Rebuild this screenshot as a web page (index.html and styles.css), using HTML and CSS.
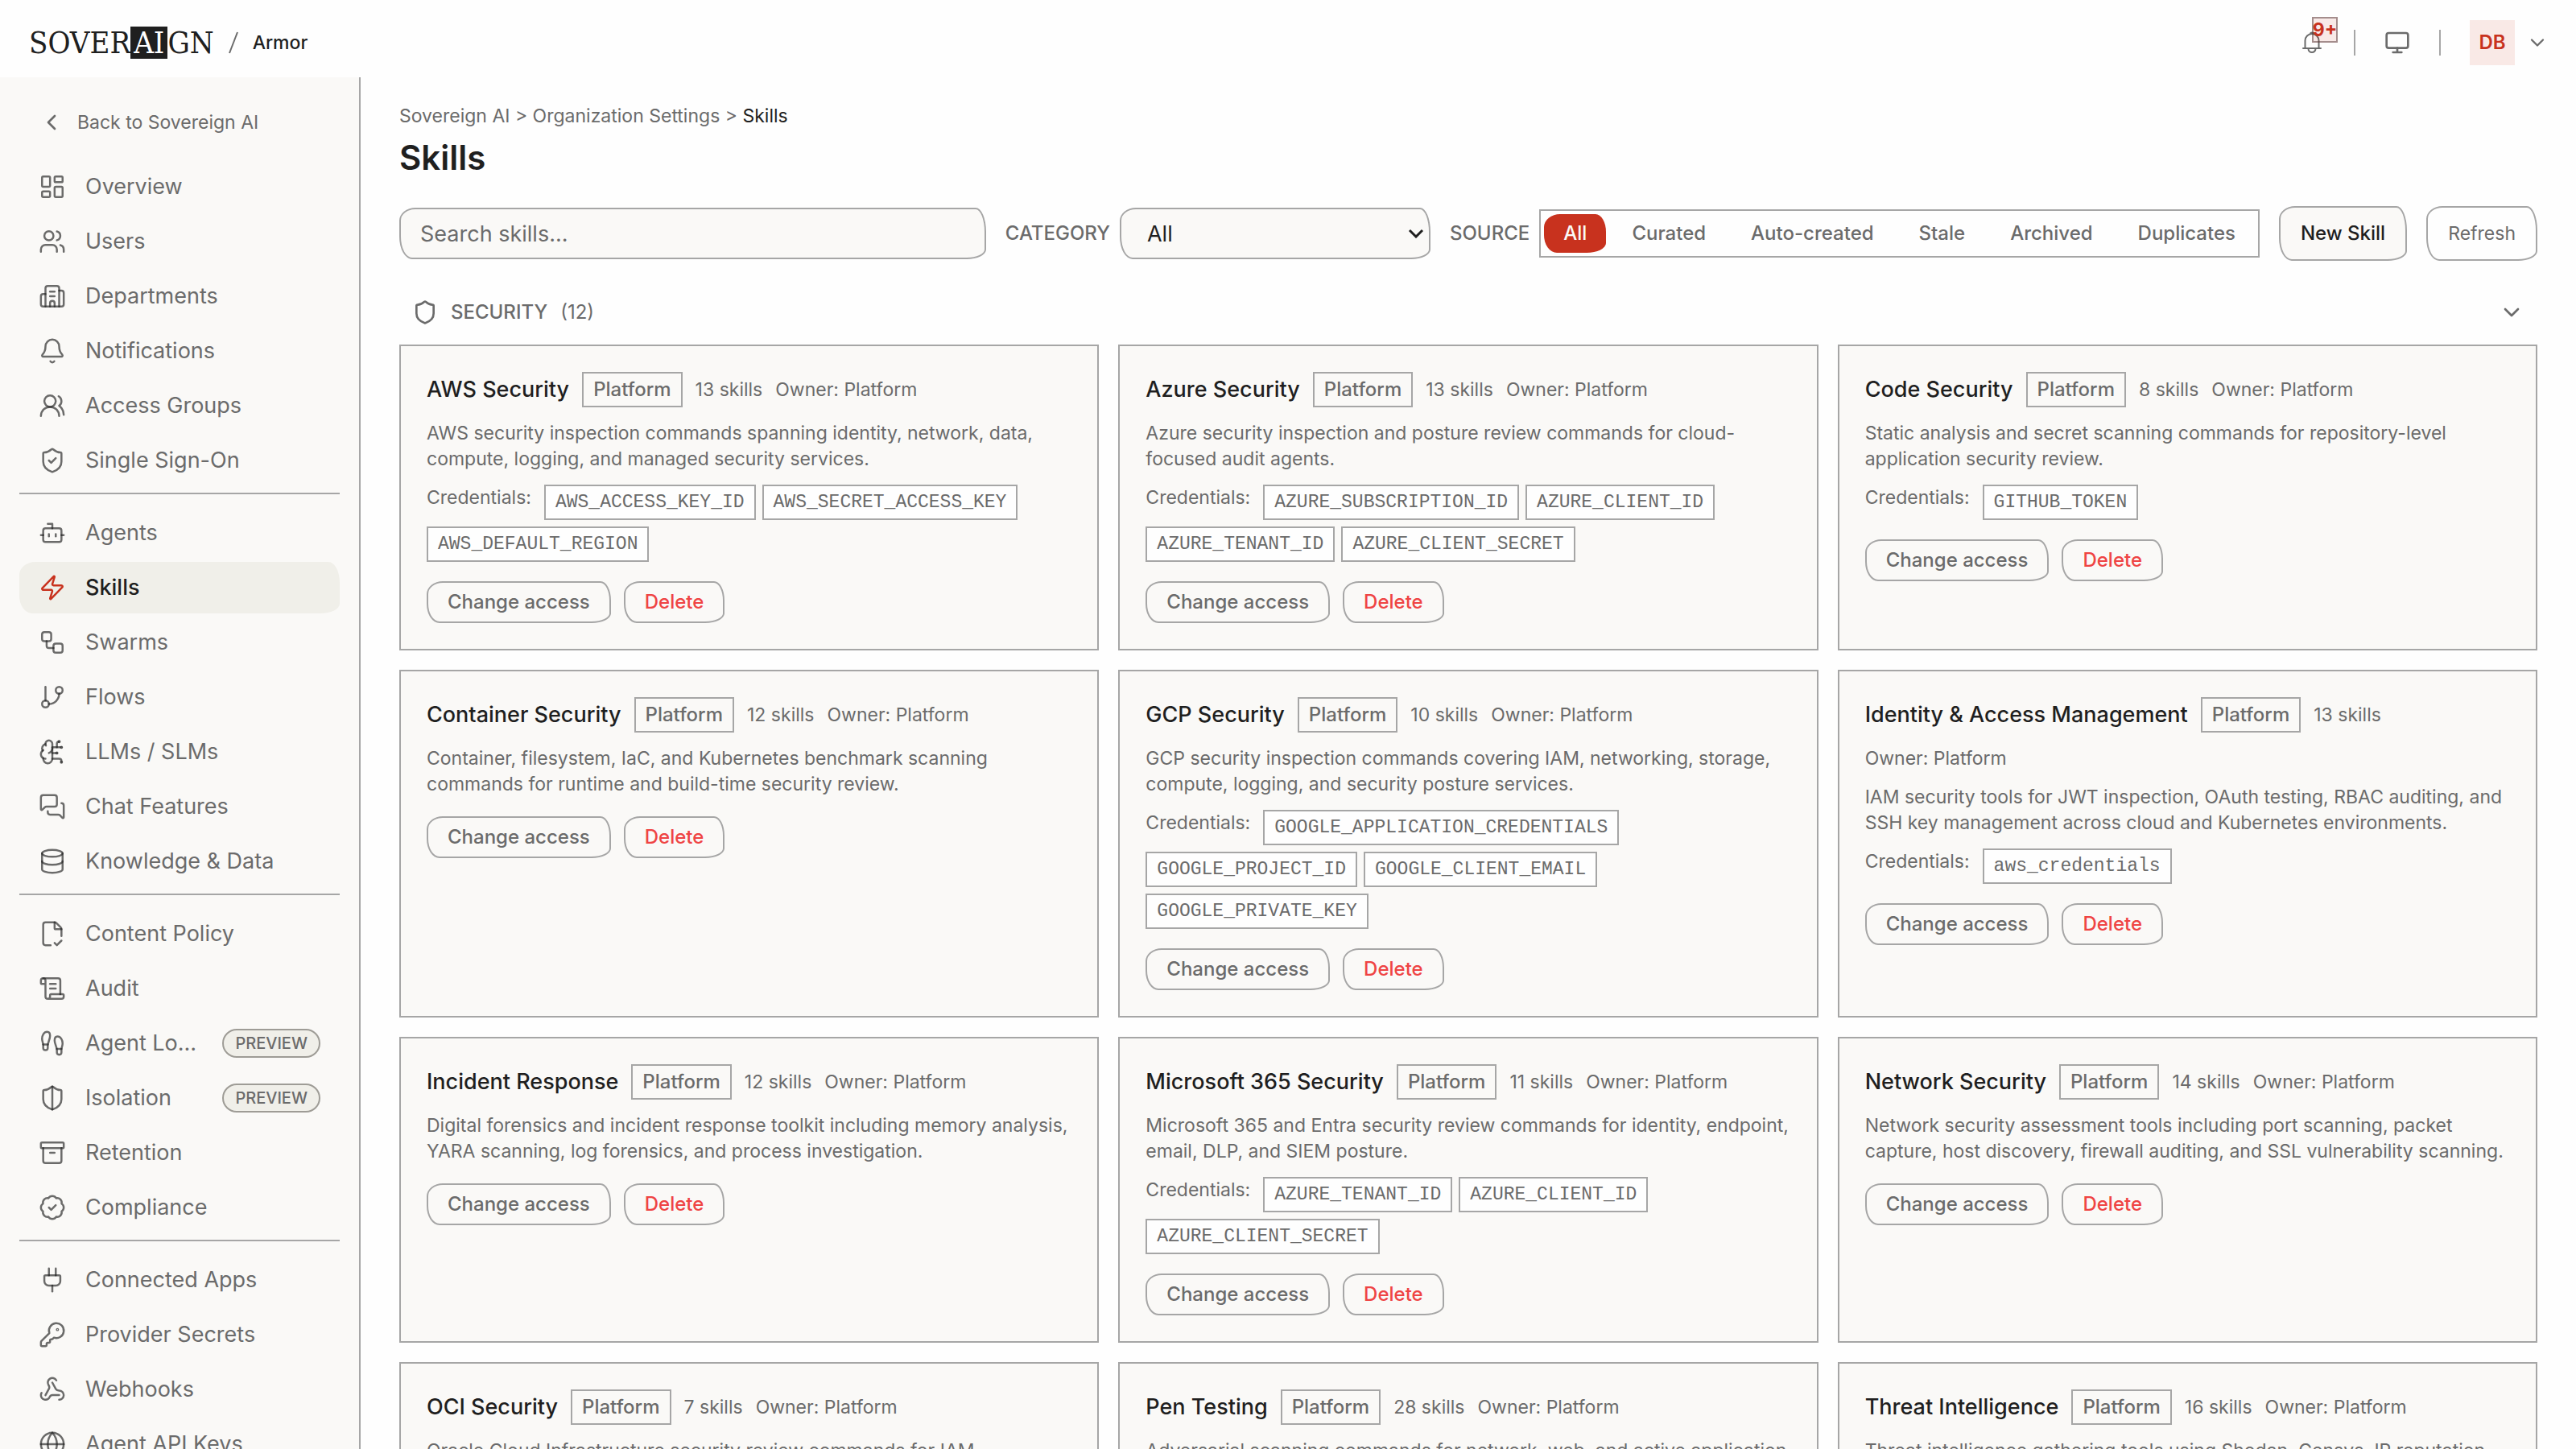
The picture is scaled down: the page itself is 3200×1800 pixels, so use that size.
FILE: index.html
```html
<!DOCTYPE html>
<html lang="en">
  <head>
    <meta charset="UTF-8" />
    <meta name="viewport" content="width=device-width, initial-scale=1.0" />
    <title>Skills - Armor</title>
    <link rel="stylesheet" href="styles.css" />
  </head>
  <body>
    <header class="topbar">
      <a class="logo" href="#">SOVER<span class="logo-mark">AI</span>GN</a>
      <svg class="slash" viewBox="0 0 12 28"><path d="M11 1 1 27" /></svg>
      <a class="org" href="#">Armor</a>
      <div class="topbar-right">
        <button class="icon-button" aria-label="Notifications">
          <svg class="icon" viewBox="0 0 32 32">
            <path d="M5 23h22M7.500 23V13.500a8.500 8.500 0 0 1 17 0V23M14 5.500a2 2 0 0 1 4 0M11.500 23.500a4.500 4.500 0 0 0 9 0" />
          </svg>
          <span class="bell-count">9+</span>
        </button>
        <span class="divider"></span>
        <button class="icon-button" aria-label="Theme">
          <svg class="icon" viewBox="0 0 24 24">
            <rect width="20" height="14" x="2" y="3" rx="2" />
            <path d="M8 21h8M12 17v4" />
          </svg>
        </button>
        <span class="divider"></span>
        <button class="account">
          <span class="avatar">DB</span>
          <svg class="icon icon-small" viewBox="0 0 24 24"><path d="m6 9 6 6 6-6" /></svg>
        </button>
      </div>
    </header>

    <div class="layout">
      <nav class="sidebar">
        <a class="back" href="#">
          <svg class="icon" viewBox="0 0 24 24"><path d="m15 18-6-6 6-6" /></svg>
          Back to Sovereign AI
        </a>
        <div class="nav-group">
          <a class="nav-item" href="#">
            <svg class="icon" viewBox="0 0 24 24"><rect width="7" height="9" x="3" y="3" rx="1" /><rect width="7" height="5" x="14" y="3" rx="1" /><rect width="7" height="9" x="14" y="12" rx="1" /><rect width="7" height="5" x="3" y="16" rx="1" /></svg>
            <span>Overview</span>
          </a>
          <a class="nav-item" href="#">
            <svg class="icon" viewBox="0 0 24 24"><path d="M16 21v-2a4 4 0 0 0-4-4H6a4 4 0 0 0-4 4v2" /><circle cx="9" cy="7" r="4" /><path d="M22 21v-2a4 4 0 0 0-3-3.870" /><path d="M16 3.130a4 4 0 0 1 0 7.750" /></svg>
            <span>Users</span>
          </a>
          <a class="nav-item" href="#">
            <svg class="icon" viewBox="0 0 24 24"><path d="M10 12h4" /><path d="M10 8h4" /><path d="M14 21v-3a2 2 0 0 0-4 0v3" /><path d="M6 10H4a2 2 0 0 0-2 2v7a2 2 0 0 0 2 2h16a2 2 0 0 0 2-2V9a2 2 0 0 0-2-2h-2" /><path d="M6 21V5a2 2 0 0 1 2-2h8a2 2 0 0 1 2 2v16" /></svg>
            <span>Departments</span>
          </a>
          <a class="nav-item" href="#">
            <svg class="icon" viewBox="0 0 24 24"><path d="M10.268 21a2 2 0 0 0 3.464 0" /><path d="M3.262 15.326A1 1 0 0 0 4 17h16a1 1 0 0 0 .74-1.673C19.410 13.956 18 12.499 18 8A6 6 0 0 0 6 8c0 4.499-1.411 5.956-2.738 7.326" /></svg>
            <span>Notifications</span>
          </a>
          <a class="nav-item" href="#">
            <svg class="icon" viewBox="0 0 24 24"><path d="M18 21a8 8 0 0 0-16 0" /><circle cx="10" cy="8" r="5" /><path d="M22 20c0-3.370-2-6.500-4-8a5 5 0 0 0-.45-8.300" /></svg>
            <span>Access Groups</span>
          </a>
          <a class="nav-item" href="#">
            <svg class="icon" viewBox="0 0 24 24"><path d="M20 13c0 5-3.500 7.500-7.660 8.950a1 1 0 0 1-.67-.01C7.500 20.500 4 18 4 13V6a1 1 0 0 1 1-1c2 0 4.500-1.200 6.240-2.720a1.170 1.170 0 0 1 1.520 0C14.510 3.810 17 5 19 5a1 1 0 0 1 1 1z" /><path d="m9 12 2 2 4-4" /></svg>
            <span>Single Sign-On</span>
          </a>
        </div>
        <div class="nav-group">
          <a class="nav-item" href="#">
            <svg class="icon" viewBox="0 0 24 24"><path d="M12 8V4H8" /><rect width="16" height="12" x="4" y="8" rx="2" /><path d="M2 14h2" /><path d="M20 14h2" /><path d="M15 13v2" /><path d="M9 13v2" /></svg>
            <span>Agents</span>
          </a>
          <a class="nav-item active" href="#" aria-current="page">
            <svg class="icon" viewBox="0 0 24 24"><path d="M4 14a1 1 0 0 1-.78-1.630l9.900-10.200a.5.5 0 0 1 .86.460l-1.920 6.020A1 1 0 0 0 13 10h7a1 1 0 0 1 .78 1.630l-9.900 10.200a.5.5 0 0 1-.86-.46l1.920-6.020A1 1 0 0 0 11 14z" /></svg>
            <span>Skills</span>
          </a>
          <a class="nav-item" href="#">
            <svg class="icon" viewBox="0 0 24 24"><rect width="8" height="8" x="3" y="3" rx="2" /><path d="M7 11v4a2 2 0 0 0 2 2h4" /><rect width="8" height="8" x="13" y="13" rx="2" /></svg>
            <span>Swarms</span>
          </a>
          <a class="nav-item" href="#">
            <svg class="icon" viewBox="0 0 24 24"><path d="M6 3v12" /><circle cx="18" cy="6" r="3" /><circle cx="6" cy="18" r="3" /><path d="M18 9a9 9 0 0 1-9 9" /></svg>
            <span>Flows</span>
          </a>
          <a class="nav-item" href="#">
            <svg class="icon" viewBox="0 0 24 24"><path d="M12 5a3 3 0 1 0-5.997.125 4 4 0 0 0-2.526 5.770 4 4 0 0 0 .556 6.588A4 4 0 1 0 12 18Z" /><path d="M9 13a4.500 4.500 0 0 0 3-4" /><path d="M6.003 5.125A3 3 0 0 0 6.401 6.500" /><path d="M3.477 10.896a4 4 0 0 1 .585-.396" /><path d="M6 18a4 4 0 0 1-1.967-.516" /><path d="M12 13h4" /><path d="M12 18h6a2 2 0 0 1 2 2v1" /><path d="M12 8h8" /><path d="M16 8V5a2 2 0 0 1 2-2" /><circle cx="16" cy="13" r=".5" /><circle cx="18" cy="3" r=".5" /><circle cx="20" cy="21" r=".5" /><circle cx="20" cy="8" r=".5" /></svg>
            <span>LLMs / SLMs</span>
          </a>
          <a class="nav-item" href="#">
            <svg class="icon" viewBox="0 0 24 24"><path d="M16 10a2 2 0 0 1-2 2H6.828a2 2 0 0 0-1.414.586l-2.202 2.202A.71.71 0 0 1 2 14.286V4a2 2 0 0 1 2-2h10a2 2 0 0 1 2 2z" /><path d="M20 9a2 2 0 0 1 2 2v10.286a.71.71 0 0 1-1.212.502l-2.202-2.202A2 2 0 0 0 17.172 19H10a2 2 0 0 1-2-2v-1" /></svg>
            <span>Chat Features</span>
          </a>
          <a class="nav-item" href="#">
            <svg class="icon" viewBox="0 0 24 24"><ellipse cx="12" cy="5" rx="9" ry="3" /><path d="M3 5v14a9 3 0 0 0 18 0V5" /><path d="M3 12a9 3 0 0 0 18 0" /></svg>
            <span>Knowledge &amp; Data</span>
          </a>
        </div>
        <div class="nav-group">
          <a class="nav-item" href="#">
            <svg class="icon" viewBox="0 0 24 24"><path d="M10.500 22H6a2 2 0 0 1-2-2V4a2 2 0 0 1 2-2h8a2.400 2.400 0 0 1 1.706.706l3.588 3.588A2.400 2.400 0 0 1 20 8v6" /><path d="M14 2v5a1 1 0 0 0 1 1h5" /><path d="m14 20 2 2 4-4" /></svg>
            <span>Content Policy</span>
          </a>
          <a class="nav-item" href="#">
            <svg class="icon" viewBox="0 0 24 24"><path d="M15 12h-5" /><path d="M15 8h-5" /><path d="M19 17V5a2 2 0 0 0-2-2H4" /><path d="M8 21h12a2 2 0 0 0 2-2v-1a1 1 0 0 0-1-1H11a1 1 0 0 0-1 1v1a2 2 0 1 1-4 0V5a2 2 0 1 0-4 0v2a1 1 0 0 0 1 1h3" /></svg>
            <span>Audit</span>
          </a>
          <a class="nav-item" href="#">
            <svg class="icon" viewBox="0 0 24 24"><path d="M4 16v-2.380C4 11.500 2.970 10.500 3 8c.03-2.720 1.490-6 4.500-6C9.370 2 10 3.800 10 5.500c0 3.110-2 5.660-2 8.680V16a2 2 0 1 1-4 0Z" /><path d="M20 20v-2.380c0-2.120 1.030-3.120 1-5.620-.03-2.720-1.490-6-4.500-6C14.630 6 14 7.800 14 9.500c0 3.110 2 5.660 2 8.680V20a2 2 0 1 0 4 0Z" /><path d="M16 17h4" /><path d="M4 13h4" /></svg>
            <span>Agent Lo…</span>
            <small class="pill">PREVIEW</small>
          </a>
          <a class="nav-item" href="#">
            <svg class="icon" viewBox="0 0 24 24"><path d="M20 13c0 5-3.500 7.500-7.660 8.950a1 1 0 0 1-.67-.01C7.500 20.500 4 18 4 13V6a1 1 0 0 1 1-1c2 0 4.500-1.200 6.240-2.720a1.170 1.170 0 0 1 1.520 0C14.510 3.810 17 5 19 5a1 1 0 0 1 1 1z" /><path d="M12 22V2" /></svg>
            <span>Isolation</span>
            <small class="pill">PREVIEW</small>
          </a>
          <a class="nav-item" href="#">
            <svg class="icon" viewBox="0 0 24 24"><rect width="20" height="5" x="2" y="3" rx="1" /><path d="M4 8v11a2 2 0 0 0 2 2h12a2 2 0 0 0 2-2V8" /><path d="M10 12h4" /></svg>
            <span>Retention</span>
          </a>
          <a class="nav-item" href="#">
            <svg class="icon" viewBox="0 0 24 24"><path d="M3.850 8.620a4 4 0 0 1 4.780-4.770 4 4 0 0 1 6.740 0 4 4 0 0 1 4.780 4.780 4 4 0 0 1 0 6.740 4 4 0 0 1-4.770 4.780 4 4 0 0 1-6.750 0 4 4 0 0 1-4.780-4.770 4 4 0 0 1 0-6.760Z" /><path d="m9 12 2 2 4-4" /></svg>
            <span>Compliance</span>
          </a>
        </div>
        <div class="nav-group">
          <a class="nav-item" href="#">
            <svg class="icon" viewBox="0 0 24 24"><path d="M12 22v-5" /><path d="M9 8V2" /><path d="M15 8V2" /><path d="M18 8a1 1 0 0 1 1 1v4a4 4 0 0 1-4 4H9a4 4 0 0 1-4-4V9a1 1 0 0 1 1-1z" /></svg>
            <span>Connected Apps</span>
          </a>
          <a class="nav-item" href="#">
            <svg class="icon" viewBox="0 0 24 24"><path d="M2.586 17.414A2 2 0 0 0 2 18.828V21a1 1 0 0 0 1 1h3a1 1 0 0 0 1-1v-1a1 1 0 0 1 1-1h1a1 1 0 0 0 1-1v-1a1 1 0 0 1 1-1h.172a2 2 0 0 0 1.414-.586l.814-.814a6.500 6.500 0 1 0-4-4z" /><circle cx="16.500" cy="7.500" r=".5" /></svg>
            <span>Provider Secrets</span>
          </a>
          <a class="nav-item" href="#">
            <svg class="icon" viewBox="0 0 24 24"><path d="M18 16.980h-5.990c-1.100 0-1.950.94-2.480 1.900A4 4 0 0 1 2 17c.01-.7.200-1.400.57-2" /><path d="m6 17 3.130-5.780c.53-.97.100-2.180-.5-3.100a4 4 0 1 1 6.890-4.060" /><path d="m12 6 3.130 5.730C15.660 12.700 16.900 13 18 13a4 4 0 0 1 0 8" /></svg>
            <span>Webhooks</span>
          </a>
          <a class="nav-item" href="#">
            <svg class="icon" viewBox="0 0 24 24"><circle cx="12" cy="12" r="10" /><path d="M12 2a14.500 14.500 0 0 0 0 20 14.500 14.500 0 0 0 0-20" /><path d="M2 12h20" /></svg>
            <span>Agent API Keys</span>
          </a>
        </div>
      </nav>

      <main class="content">
        <div class="breadcrumb">
          <a href="#">Sovereign AI</a> &gt; <a href="#">Organization Settings</a> &gt; <strong>Skills</strong>
        </div>
        <h1>Skills</h1>

        <div class="toolbar">
          <input class="search" type="text" placeholder="Search skills..." aria-label="Search skills" />
          <div class="field">
            <label for="category">CATEGORY</label>
            <select id="category">
              <option>All</option>
            </select>
          </div>
          <div class="field">
            <span class="label">SOURCE</span>
            <div class="segmented">
              <button class="selected">All</button>
              <button>Curated</button>
              <button>Auto-created</button>
              <button>Stale</button>
              <button>Archived</button>
              <button>Duplicates</button>
            </div>
          </div>
          <button class="btn btn-new">New Skill</button>
          <button class="btn">Refresh</button>
        </div>

        <button class="section-head">
          <svg class="icon" viewBox="0 0 24 24"><path d="M20 13c0 5-3.500 7.500-7.660 8.950a1 1 0 0 1-.67-.01C7.500 20.500 4 18 4 13V6a1 1 0 0 1 1-1c2 0 4.500-1.200 6.240-2.720a1.170 1.170 0 0 1 1.520 0C14.510 3.810 17 5 19 5a1 1 0 0 1 1 1z" /></svg>
          <span class="section-title">SECURITY</span>
          <span>(12)</span>
          <svg class="icon toggle" viewBox="0 0 24 24"><path d="m6 9 6 6 6-6" /></svg>
        </button>

        <div class="cards">
          <article class="card">
            <div class="card-head"><h2>AWS Security</h2><span class="badge">Platform</span><span>13 skills</span><span>Owner: Platform</span></div>
            <p>AWS security inspection commands spanning identity, network, data, compute, logging, and managed security services.</p>
            <div class="creds"><span class="creds-label">Credentials:</span><code>AWS_ACCESS_KEY_ID</code><code>AWS_SECRET_ACCESS_KEY</code><code>AWS_DEFAULT_REGION</code></div>
            <div class="actions"><button>Change access</button><button class="delete">Delete</button></div>
          </article>

          <article class="card">
            <div class="card-head"><h2>Azure Security</h2><span class="badge">Platform</span><span>13 skills</span><span>Owner: Platform</span></div>
            <p>Azure security inspection and posture review commands for cloud-focused audit agents.</p>
            <div class="creds"><span class="creds-label">Credentials:</span><code>AZURE_SUBSCRIPTION_ID</code><code>AZURE_CLIENT_ID</code><code>AZURE_TENANT_ID</code><code>AZURE_CLIENT_SECRET</code></div>
            <div class="actions"><button>Change access</button><button class="delete">Delete</button></div>
          </article>

          <article class="card">
            <div class="card-head"><h2>Code Security</h2><span class="badge">Platform</span><span>8 skills</span><span>Owner: Platform</span></div>
            <p>Static analysis and secret scanning commands for repository-level application security review.</p>
            <div class="creds"><span class="creds-label">Credentials:</span><code>GITHUB_TOKEN</code></div>
            <div class="actions"><button>Change access</button><button class="delete">Delete</button></div>
          </article>

          <article class="card">
            <div class="card-head"><h2>Container Security</h2><span class="badge">Platform</span><span>12 skills</span><span>Owner: Platform</span></div>
            <p>Container, filesystem, IaC, and Kubernetes benchmark scanning commands for runtime and build-time security review.</p>
            <div class="actions"><button>Change access</button><button class="delete">Delete</button></div>
          </article>

          <article class="card">
            <div class="card-head"><h2>GCP Security</h2><span class="badge">Platform</span><span>10 skills</span><span>Owner: Platform</span></div>
            <p>GCP security inspection commands covering IAM, networking, storage, compute, logging, and security posture services.</p>
            <div class="creds"><span class="creds-label">Credentials:</span><code>GOOGLE_APPLICATION_CREDENTIALS</code><code>GOOGLE_PROJECT_ID</code><code>GOOGLE_CLIENT_EMAIL</code><code>GOOGLE_PRIVATE_KEY</code></div>
            <div class="actions"><button>Change access</button><button class="delete">Delete</button></div>
          </article>

          <article class="card">
            <div class="card-head"><h2>Identity &amp; Access Management</h2><span class="badge">Platform</span><span>13 skills</span><span>Owner: Platform</span></div>
            <p>IAM security tools for JWT inspection, OAuth testing, RBAC auditing, and SSH key management across cloud and Kubernetes environments.</p>
            <div class="creds"><span class="creds-label">Credentials:</span><code>aws_credentials</code></div>
            <div class="actions"><button>Change access</button><button class="delete">Delete</button></div>
          </article>

          <article class="card">
            <div class="card-head"><h2>Incident Response</h2><span class="badge">Platform</span><span>12 skills</span><span>Owner: Platform</span></div>
            <p>Digital forensics and incident response toolkit including memory analysis, YARA scanning, log forensics, and process investigation.</p>
            <div class="actions"><button>Change access</button><button class="delete">Delete</button></div>
          </article>

          <article class="card">
            <div class="card-head"><h2>Microsoft 365 Security</h2><span class="badge">Platform</span><span>11 skills</span><span>Owner: Platform</span></div>
            <p>Microsoft 365 and Entra security review commands for identity, endpoint, email, DLP, and SIEM posture.</p>
            <div class="creds"><span class="creds-label">Credentials:</span><code>AZURE_TENANT_ID</code><code>AZURE_CLIENT_ID</code><code>AZURE_CLIENT_SECRET</code></div>
            <div class="actions"><button>Change access</button><button class="delete">Delete</button></div>
          </article>

          <article class="card">
            <div class="card-head"><h2>Network Security</h2><span class="badge">Platform</span><span>14 skills</span><span>Owner: Platform</span></div>
            <p>Network security assessment tools including port scanning, packet capture, host discovery, firewall auditing, and SSL vulnerability scanning.</p>
            <div class="actions"><button>Change access</button><button class="delete">Delete</button></div>
          </article>

          <article class="card">
            <div class="card-head"><h2>OCI Security</h2><span class="badge">Platform</span><span>7 skills</span><span>Owner: Platform</span></div>
            <p>Oracle Cloud Infrastructure security review commands for IAM,</p>
          </article>

          <article class="card">
            <div class="card-head"><h2>Pen Testing</h2><span class="badge">Platform</span><span>28 skills</span><span>Owner: Platform</span></div>
            <p>Adversarial scanning commands for network, web, and active application</p>
          </article>

          <article class="card">
            <div class="card-head"><h2>Threat Intelligence</h2><span class="badge">Platform</span><span>16 skills</span><span>Owner: Platform</span></div>
            <p>Threat intelligence gathering tools using Shodan, Censys, IP reputation,</p>
          </article>
        </div>
      </main>
    </div>
  </body>
</html>
```
FILE: styles.css
```css
:root {
  --ink: #1f1f1f;
  --muted: #6b6b6b;
  --line: #a6a6a6;
  --panel: #faf9f7;
  --active: #f0efe9;
  --red: #c8321e;
  --wobble: 20px 13px 24px 16px / 16px 30px 12px 28px;
}
* {
  box-sizing: border-box;
}
body {
  margin: 0;
  height: 100vh;
  display: flex;
  flex-direction: column;
  overflow: hidden;
  background: #fefefe;
  color: var(--muted);
  font-family: Inter, "Liberation Sans", sans-serif;
  font-size: 23px;
  line-height: 32px;
}
a {
  color: inherit;
  text-decoration: none;
}
button,
input,
select {
  font: inherit;
  color: inherit;
}
button {
  background: none;
  border: none;
  padding: 0;
  cursor: pointer;
}
.icon {
  width: 32px;
  height: 32px;
  flex: none;
  fill: none;
  stroke: currentColor;
  stroke-width: 2;
  stroke-linecap: round;
  stroke-linejoin: round;
  overflow: visible;
}

/* top bar */
.topbar {
  flex: none;
  height: 96px;
  padding: 10px 34px 0 36px;
  display: flex;
  align-items: center;
}
.logo {
  display: flex;
  color: var(--ink);
  font-family: "DejaVu Serif Condensed", "DejaVu Serif", serif;
  font-size: 38px;
  line-height: 40px;
}
.logo-mark {
  background: var(--ink);
  color: #fff;
  padding: 0 4px;
}
.slash {
  width: 12px;
  height: 28px;
  margin: 0 18px;
  stroke: var(--muted);
  stroke-width: 2;
}
.org {
  color: var(--ink);
  font-weight: 500;
}
.topbar-right {
  margin-left: auto;
  display: flex;
  align-items: center;
  gap: 36px;
}
.icon-button {
  display: flex;
  position: relative;
}
.bell-count {
  position: absolute;
  top: -16px;
  right: -16px;
  width: 32px;
  height: 32px;
  border: 2px solid rgba(80, 50, 50, 0.5);
  background: rgba(200, 50, 30, 0.1);
  color: var(--red);
  font-size: 23px;
  font-weight: 700;
  line-height: 28px;
  display: flex;
  justify-content: center;
}
.divider {
  width: 2px;
  height: 32px;
  background: var(--line);
}
.account {
  display: flex;
  align-items: center;
  gap: 14px;
}
.avatar {
  width: 56px;
  height: 56px;
  line-height: 56px;
  background: #f9e9e6;
  color: var(--red);
  font-size: 24px;
  font-weight: 600;
}
.icon-small {
  width: 28px;
  height: 28px;
}

.layout {
  flex: 1;
  min-height: 0;
  display: flex;
}

/* sidebar */
.sidebar {
  flex: none;
  width: 448px;
  padding: 32px 24px;
  background: var(--panel);
  border-right: 2px solid var(--line);
  overflow: hidden;
}
.back {
  display: flex;
  align-items: center;
  gap: 16px;
  height: 48px;
  padding: 0 24px;
  margin-bottom: 24px;
}
.nav-group {
  display: flex;
  flex-direction: column;
  gap: 4px;
}
.nav-group + .nav-group {
  margin-top: 8px;
  padding-top: 16px;
  border-top: 2px solid var(--line);
}
.nav-item {
  height: 64px;
  padding: 0 24px;
  display: flex;
  align-items: center;
  gap: 24px;
  font-size: 27px;
  border-radius: 20px 14px 24px 16px / 16px 26px 12px 22px;
}
.nav-item .icon {
  width: 34px;
  height: 34px;
  stroke: rgba(31, 31, 31, 0.65);
  stroke-width: 1.75;
}
.nav-item.active {
  background: var(--active);
  color: var(--ink);
  font-weight: 500;
}
.nav-item.active .icon {
  stroke: var(--red);
}
.pill {
  margin-left: auto;
  padding: 0 14px;
  border: 2px solid #9e9c96;
  border-radius: 18px;
  background: var(--active);
  font-size: 20px;
  font-weight: 500;
  line-height: 32px;
}

/* page */
.content {
  flex: 1;
  min-width: 0;
  padding: 32px 48px 0;
}
.breadcrumb strong {
  color: var(--ink);
  font-weight: 400;
}
h1 {
  margin: 12px 0 36px;
  color: var(--ink);
  font-size: 42px;
  font-weight: 600;
  line-height: 48px;
}
.toolbar {
  display: flex;
  align-items: center;
  gap: 24px;
}
.search,
select {
  height: 64px;
  border: 2px solid var(--line);
  border-radius: var(--wobble);
  background-color: var(--panel);
  font-size: 27px;
}
.search {
  flex: 1;
  min-width: 0;
  padding: 0 24px;
}
.search::placeholder {
  color: var(--muted);
}
.field {
  display: flex;
  align-items: center;
  gap: 12px;
  font-size: 24px;
  font-weight: 500;
}
select {
  width: 386px;
  padding: 2px 32px 0;
  appearance: none;
  color: var(--ink);
  font-weight: 400;
  background-image: url("data:image/svg+xml,%3Csvg xmlns='http://www.w3.org/2000/svg' viewBox='0 0 20 12' fill='none' stroke='%231f1f1f' stroke-width='3'%3E%3Cpath d='m2 2 8 8 8-8'/%3E%3C/svg%3E");
  background-repeat: no-repeat;
  background-position: right 6px center;
  background-size: 20px 12px;
}
.segmented {
  display: flex;
  gap: 8px;
  padding: 4px;
  border: 2px solid var(--line);
}
.segmented button {
  height: 48px;
  padding: 0 24px;
  font-weight: 500;
  border-radius: 20px 13px 24px 16px / 16px 22px 12px 22px;
}
.segmented .selected {
  background: var(--red);
  color: #faf9f7;
}
.btn {
  height: 68px;
  padding: 0 25px;
  border: 2px solid var(--line);
  border-radius: var(--wobble);
}
.btn-new {
  background: var(--panel);
  color: var(--ink);
  font-size: 24px;
  font-weight: 500;
}
.section-head {
  width: 100%;
  display: flex;
  align-items: center;
  gap: 16px;
  margin: 40px 0 16px;
  padding: 8px 16px;
  font-size: 24px;
}
.section-title {
  font-weight: 500;
}
.toggle {
  margin-left: auto;
}

/* cards */
.cards {
  display: grid;
  grid-template-columns: repeat(3, 1fr);
  gap: 24px;
}
.card {
  padding: 32px;
  border: 2px solid var(--line);
  background: var(--panel);
}
.card-head {
  display: flex;
  flex-wrap: wrap;
  align-items: center;
  gap: 16px;
}
.card h2 {
  margin: 0;
  color: var(--ink);
  font-size: 27px;
  font-weight: 500;
  line-height: 40px;
}
.badge {
  padding: 4px 12px;
  border: 2px solid var(--line);
  font-size: 24px;
  font-weight: 500;
}
.card p {
  margin: 16px 0 0;
}
.creds {
  display: flex;
  flex-wrap: wrap;
  align-items: flex-start;
  gap: 8px;
  margin-top: 16px;
}
.creds-label {
  margin-right: 8px;
}
.creds code {
  padding: 4px 12px;
  border: 2px solid var(--line);
  background: #fefefe;
  font-family: "Liberation Mono", monospace;
  font-size: 23px;
}
.actions {
  display: flex;
  gap: 16px;
  margin-top: 24px;
}
.actions button {
  height: 52px;
  padding: 0 24px;
  border: 2px solid var(--line);
  border-radius: 20px 13px 24px 16px / 16px 24px 12px 24px;
  font-size: 24px;
  font-weight: 500;
}
.actions .delete {
  color: #ef4444;
}
```
